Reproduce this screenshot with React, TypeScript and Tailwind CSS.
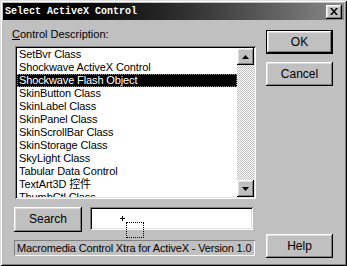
import React from "react";

const items = [
  "SetBvr Class",
  "Shockwave ActiveX Control",
  "Shockwave Flash Object",
  "SkinButton Class",
  "SkinLabel Class",
  "SkinPanel Class",
  "SkinScrollBar Class",
  "SkinStorage Class",
  "SkyLight Class",
  "Tabular Data Control",
  "TextArt3D 控件",
  "ThumbCtl Class",
];

const raised =
  "shadow-[inset_-1px_-1px_#000,inset_1px_1px_#fff,inset_-2px_-2px_#808080,inset_2px_2px_#dfdfdf]";

export default function App() {
  return (
    <div
      className="w-[347px] h-[266px] bg-[#c0c0c0] p-[3px] flex flex-col shadow-[inset_1px_1px_#dfdfdf,inset_-1px_-1px_#000,inset_2px_2px_#fff,inset_-2px_-2px_#808080] text-black text-[11px] leading-[13px]"
      style={{ fontFamily: '"Liberation Sans", Arial, "Noto Sans CJK SC", sans-serif' }}
    >
      {/* Title bar */}
      <div className="h-[17px] flex items-center pl-[2px] pr-[2px] bg-gradient-to-r from-[#000] via-[#2a2a2a] to-[#8a8a8a]">
        <span
          className="text-white font-bold text-[10px] leading-[12px] flex-1"
          style={{ fontFamily: '"Liberation Mono", "Courier New", monospace' }}
        >
          Select ActiveX Control
        </span>
        <div className={`w-[16px] h-[14px] bg-[#c0c0c0] ${raised} flex items-center justify-center`}>
          <svg width="8" height="7" viewBox="0 0 8 7">
            <path d="M0 0h2l2 2.5L6 0h2L5 3.5L8 7H6L4 4.5L2 7H0l3-3.5z" fill="#000" />
          </svg>
        </div>
      </div>

      {/* Body */}
      <div className="flex flex-1">
        {/* Left column */}
        <div className="w-[253px] pl-[9px] flex flex-col">
          <div className="mt-[8px] h-[13px]">
            <span className="underline">C</span>ontrol Description:
          </div>
          {/* Listbox */}
          <div className="mt-[5px] ml-[3px] w-[241px] h-[153px] bg-white p-[2px] flex shadow-[inset_1px_1px_#808080,inset_-1px_-1px_#fff,inset_2px_2px_#000,inset_-2px_-2px_#dfdfdf]">
            <div className="flex-1 overflow-hidden flex flex-col tracking-[-0.12px]">
              {items.map((it, i) =>
                i === 2 ? (
                  <div
                    key={it}
                    className="h-[13px] shrink-0 bg-black text-white pl-[2px] whitespace-nowrap outline-1 outline-dotted outline-offset-[-1px] outline-[#888]"
                  >
                    {it}
                  </div>
                ) : (
                  <div key={it} className="h-[13px] shrink-0 pl-[2px] whitespace-nowrap">
                    {it}
                  </div>
                )
              )}
            </div>
            {/* Scrollbar */}
            <div className="w-[17px] flex flex-col bg-[repeating-conic-gradient(#c0c0c0_0%_25%,#fff_0%_50%)] bg-[length:2px_2px]">
              <div className={`h-[17px] bg-[#c0c0c0] ${raised} flex items-center justify-center`}>
                <svg width="7" height="4" viewBox="0 0 7 4">
                  <path d="M3.5 0L7 4H0z" fill="#000" />
                </svg>
              </div>
              <div className="flex-1" />
              <div className={`h-[17px] bg-[#c0c0c0] ${raised} flex items-center justify-center`}>
                <svg width="7" height="4" viewBox="0 0 7 4">
                  <path d="M0 0h7L3.5 4z" fill="#000" />
                </svg>
              </div>
            </div>
          </div>
          {/* Search row */}
          <div className="mt-[8px] ml-[2px] flex items-start">
            <div className={`w-[68px] h-[25px] bg-[#c0c0c0] ${raised} flex items-center justify-center text-[12px]`}>
              Search
            </div>
            <div className="ml-[8px] w-[163px] h-[23px] bg-white relative shadow-[inset_1px_1px_#808080,inset_-1px_-1px_#fff,inset_2px_2px_#000,inset_-2px_-2px_#dfdfdf]">
              <svg className="absolute left-[30px] top-[9px]" width="5" height="5" viewBox="0 0 5 5">
                <path d="M2.5 0v5M0 2.5h5" stroke="#000" strokeWidth="1" />
              </svg>
              <div className="absolute left-[36px] top-[15px] w-[18px] h-[16px] border border-dotted border-black" />
            </div>
          </div>
          {/* Status */}
          <div className="mt-[8px] ml-[2px] w-[241px] h-[16px] pl-[3px] flex items-center whitespace-nowrap overflow-hidden tracking-[-0.17px] shadow-[inset_1px_1px_#808080,inset_-1px_-1px_#fff]">
            Macromedia Control Xtra for ActiveX - Version 1.0
          </div>
        </div>

        {/* Right column */}
        <div className="ml-[10px] w-[67px] flex flex-col">
          <div className="mt-[10px] w-[67px] h-[24px] bg-[#c0c0c0] border border-black flex items-center justify-center">
            <div className={`w-full h-full ${raised} flex items-center justify-center text-[12px]`}>OK</div>
          </div>
          <div className={`mt-[8px] w-[67px] h-[24px] bg-[#c0c0c0] ${raised} flex items-center justify-center text-[12px]`}>
            Cancel
          </div>
          <div className={`mt-[148px] w-[67px] h-[24px] bg-[#c0c0c0] ${raised} flex items-center justify-center text-[12px]`}>
            Help
          </div>
        </div>
      </div>
    </div>
  );
}
